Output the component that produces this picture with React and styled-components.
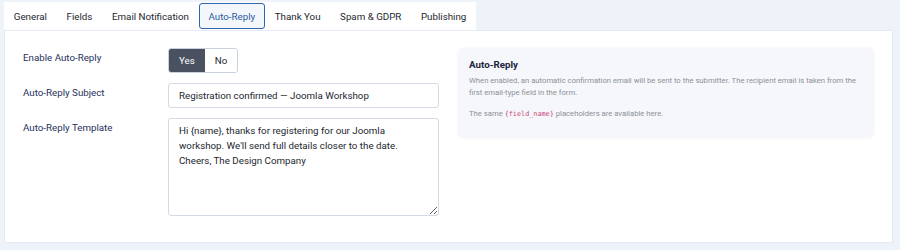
import React from "react";
import styled, { createGlobalStyle } from "styled-components";

const Global = createGlobalStyle`
  html, body { margin: 0; padding: 0; background: #eef2f9; }
  body { font-family: Roboto, "Liberation Sans", Arial, sans-serif; font-size: 9.75px; color: #22262e; }
  * { box-sizing: border-box; }
`;

const Page = styled.div`
  padding: 2px 7px 7px 4px;
  display: flex;
  flex-direction: column;
  align-items: flex-start;
`;

const TabBar = styled.div`
  display: inline-flex;
  background: #fff;
  padding: 1px 0 1px;
`;

const Tab = styled.button`
  font-family: inherit;
  font-size: 9.75px;
  height: 26px;
  padding: 0 8.8px;
  border: 1px solid ${(p) => (p.$active ? "#2f66b3" : "transparent")};
  border-radius: 3px;
  background: ${(p) => (p.$active ? "#f3f6fb" : "transparent")};
  color: ${(p) => (p.$active ? "#2a5aa3" : "#22262e")};
  font-weight: 400;
  cursor: pointer;
`;

const Panel = styled.div`
  align-self: stretch;
  background: #fff;
  border: 1px solid #e6ebf3;
  padding: 17px 18px 26px 18px;
  display: grid;
  grid-template-columns: 1fr 1fr;
  column-gap: 19px;
  align-items: start;
`;

const Form = styled.div`
  display: flex;
  flex-direction: column;
  gap: 10px;
`;

const Row = styled.div`
  display: grid;
  grid-template-columns: 145px 1fr;
  align-items: start;
`;

const Label = styled.label`
  color: #1e2f5c;
  font-size: 9.75px;
  font-weight: 400;
  line-height: 15px;
  padding-top: 2px;
`;

const Toggle = styled.div`
  display: inline-flex;
  border: 1px solid #c9d1dc;
  border-radius: 3px;
  overflow: hidden;
  height: 25px;
  justify-self: start;
`;

const ToggleOption = styled.span`
  display: flex;
  align-items: center;
  padding: 0 ${(p) => p.$pad}px;
  background: ${(p) => (p.$on ? "#4a5261" : "#fff")};
  color: ${(p) => (p.$on ? "#fff" : "#22262e")};
  font-weight: 400;
  font-size: 9.75px;
`;

const Input = styled.input`
  font-family: inherit;
  font-size: 9.75px;
  color: #22262e;
  height: 25px;
  width: 100%;
  border: 1px solid #d3dae5;
  border-radius: 3px;
  padding: 0 10px;
  outline: none;
`;

const TextArea = styled.textarea`
  font-family: inherit;
  font-size: 9.75px;
  line-height: 15px;
  color: #22262e;
  height: 98px;
  width: 100%;
  border: 1px solid #d3dae5;
  border-radius: 3px;
  padding: 4px 10px;
  outline: none;
  display: block;
`;

const InfoBox = styled.div`
  background: #f6f7fa;
  border-radius: 6px;
  box-shadow: 0 0 3px rgba(20, 40, 80, 0.06);
  padding: 9px 11px 10px;
`;

const InfoTitle = styled.h4`
  margin: 0 0 3px;
  font-size: 9.75px;
  line-height: 15px;
  font-weight: 700;
  color: #1b2540;
`;

const InfoText = styled.p`
  margin: 0 0 8px;
  font-size: 7.7px;
  line-height: 12.4px;
  color: #8b9099;
`;

const Code = styled.code`
  font-family: "DejaVu Sans Mono", "Liberation Mono", monospace;
  font-size: 6.8px;
  color: #c64a7c;
`;

const tabs = ["General", "Fields", "Email Notification", "Auto-Reply", "Thank You", "Spam & GDPR", "Publishing"];

export default function App() {
  return (
    <>
      <Global />
      <Page>
        <TabBar>
          {tabs.map((t) => (
            <Tab key={t} $active={t === "Auto-Reply"}>{t}</Tab>
          ))}
        </TabBar>
        <Panel>
          <Form>
            <Row>
              <Label>Enable Auto-Reply</Label>
              <Toggle>
                <ToggleOption $on $pad={10}>Yes</ToggleOption>
                <ToggleOption $pad={10}>No</ToggleOption>
              </Toggle>
            </Row>
            <Row>
              <Label>Auto-Reply Subject</Label>
              <Input readOnly value="Registration confirmed — Joomla Workshop" />
            </Row>
            <Row>
              <Label>Auto-Reply Template</Label>
              <TextArea
                readOnly
                value={"Hi {name}, thanks for registering for our Joomla workshop. We'll send full details closer to the date.\nCheers, The Design Company"}
              />
            </Row>
          </Form>
          <InfoBox>
            <InfoTitle>Auto-Reply</InfoTitle>
            <InfoText>
              When enabled, an automatic confirmation email will be sent to the submitter. The recipient email is taken from the first email-type field in the form.
            </InfoText>
            <InfoText>
              The same <Code>{"{field_name}"}</Code> placeholders are available here.
            </InfoText>
          </InfoBox>
        </Panel>
      </Page>
    </>
  );
}
